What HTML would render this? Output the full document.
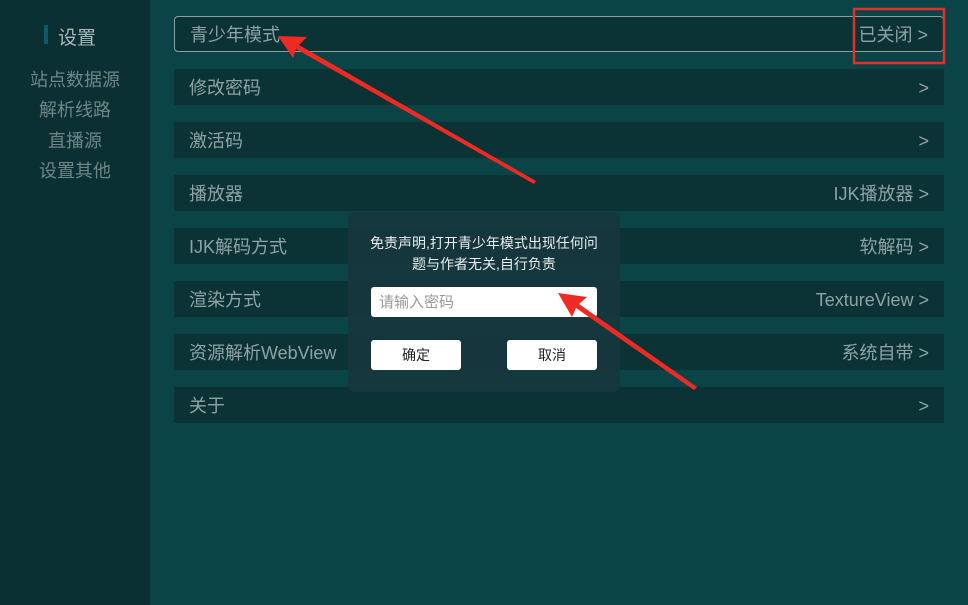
<!DOCTYPE html>
<html><head><meta charset="utf-8"><style>
body{margin:0;width:968px;height:605px;overflow:hidden;background:#0a4446;font-family:"Liberation Sans","Noto Sans CJK SC",sans-serif;position:relative}
.side{position:absolute;left:0;top:0;width:150px;height:605px;background:#0b3034}
.side .t{position:absolute;left:58px;top:23px;font-size:19px;color:#a9b8b8}
.side .bar{position:absolute;left:44px;top:25px;width:4px;height:19px;background:#0c5a6a}
.side .i{position:absolute;left:0;width:150px;text-align:center;font-size:18px;color:#6f8586}
.row{position:absolute;left:174px;width:770px;height:36px;background:#0b3336;color:#8fa2a3;font-size:18px;line-height:38px}
.row .l{position:absolute;left:15px}
.row .r{position:absolute;right:15px}
.row.sel{border:1px solid #8aa0a0;border-radius:4px;left:174px;width:768px;height:34px;line-height:36px}
.dlg{position:absolute;left:348px;top:212px;width:272px;height:180px;background:rgba(22,55,60,0.93);border-radius:6px}
.dlg .msg{position:absolute;left:0;top:21px;width:272px;text-align:center;color:#e8eeee;font-size:14px;line-height:21px}
.inp{position:absolute;left:23px;top:75px;width:226px;height:30px;background:#fff;border-radius:3px;color:#999;font-size:15px;line-height:31px;text-indent:8px}
.btn{position:absolute;top:128px;width:90px;height:30px;background:#fff;border-radius:3px;text-align:center;line-height:30px;font-size:14px;color:#222}
</style></head><body>
<div class="side"><div class="bar"></div><div class="t">设置</div>
<div class="i" style="top:66px">站点数据源</div><div class="i" style="top:96px">解析线路</div><div class="i" style="top:127px">直播源</div><div class="i" style="top:157px">设置其他</div></div>
<div class="row sel" style="top:16px"><span class="l">青少年模式</span><span class="r">已关闭 &gt;</span></div>
<div class="row" style="top:69px"><span class="l">修改密码</span><span class="r">&gt;</span></div>
<div class="row" style="top:122px"><span class="l">激活码</span><span class="r">&gt;</span></div>
<div class="row" style="top:175px"><span class="l">播放器</span><span class="r">IJK播放器 &gt;</span></div>
<div class="row" style="top:228px"><span class="l">IJK解码方式</span><span class="r">软解码 &gt;</span></div>
<div class="row" style="top:281px"><span class="l">渲染方式</span><span class="r">TextureView &gt;</span></div>
<div class="row" style="top:334px"><span class="l">资源解析WebView</span><span class="r">系统自带 &gt;</span></div>
<div class="row" style="top:387px"><span class="l">关于</span><span class="r">&gt;</span></div>
<div class="dlg"><div class="msg">免责声明,打开青少年模式出现任何问<br>题与作者无关,自行负责</div>
<div class="inp">请输入密码</div><div class="btn" style="left:23px">确定</div><div class="btn" style="left:159px">取消</div></div>
<svg width="968" height="605" style="position:absolute;left:0;top:0">
<rect x="854" y="9" width="90" height="54" fill="none" stroke="#e0302a" stroke-width="2.5"/>
<polygon points="278,36 307,37 299,45 536,181 534,184 296,49 293,58" fill="#ee2a24"/>
<polygon points="558,293 587,297 579,304 697,387 694,390 576,308 572,317" fill="#ee2a24"/>
</svg>
</body></html>
